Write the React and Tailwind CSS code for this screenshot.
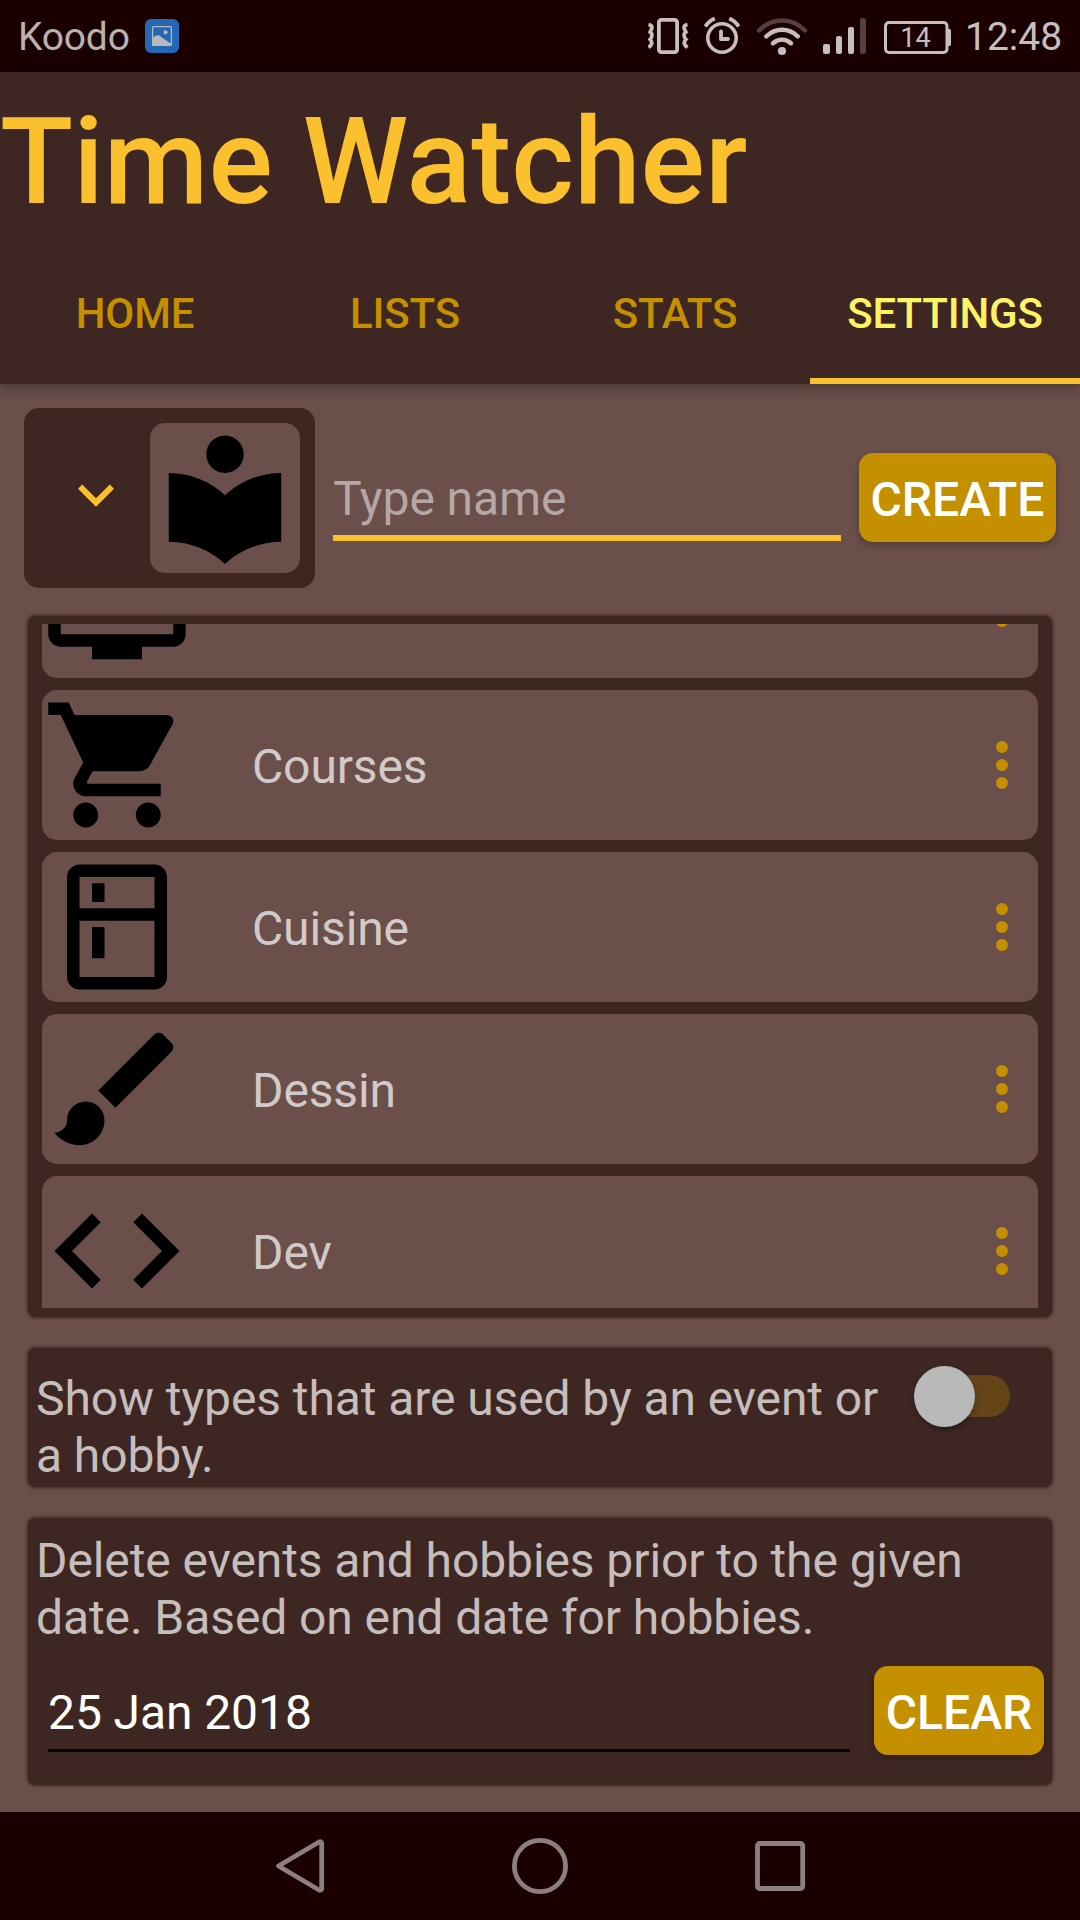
const ICONS = {
  library:
    "M12 11.55C9.64 9.35 6.48 8 3 8v11c3.48 0 6.64 1.35 9 3.55 2.36-2.19 5.52-3.55 9-3.55V8c-3.48 0-6.64 1.35-9 3.55zM12 8c1.66 0 3-1.34 3-3s-1.34-3-3-3-3 1.34-3 3 1.34 3 3 3z",
  tv: "M21 3H3c-1.1 0-2 .9-2 2v12c0 1.1.9 2 2 2h5v2h8v-2h5c1.1 0 1.99-.9 1.99-2L23 5c0-1.1-.9-2-2-2zm0 14H3V5h18v12z",
  cart: "M7 18c-1.1 0-1.99.9-1.99 2S5.9 22 7 22s2-.9 2-2-.9-2-2-2zM1 2v2h2l3.6 7.59-1.35 2.45c-.16.28-.25.61-.25.96 0 1.1.9 2 2 2h12v-2H7.42c-.14 0-.25-.11-.25-.25l.03-.12.9-1.63h7.45c.75 0 1.41-.41 1.75-1.03l3.58-6.49c.08-.14.12-.31.12-.48 0-.55-.45-1-1-1H5.21l-.94-2H1zm16 16c-1.1 0-1.99.9-1.99 2s.89 2 1.99 2 2-.9 2-2-.9-2-2-2z",
  kitchen:
    "M18 2.01L6 2c-1.1 0-2 .89-2 2v16c0 1.1.9 2 2 2h12c1.1 0 2-.9 2-2V4c0-1.1-.9-1.99-2-1.99zM18 20H6v-9.02h12V20zm0-11H6V4h12v5zM8 5h2v3H8zm0 7h2v5H8z",
  brush:
    "M7 14c-1.66 0-3 1.34-3 3 0 1.31-1.16 2-2 2 .92 1.22 2.49 2 4 2 2.21 0 4-1.79 4-4 0-1.66-1.34-3-3-3zm13.71-9.37l-1.34-1.34c-.39-.39-1.02-.39-1.41 0L9 12.25 11.75 15l8.96-8.96c.39-.39.39-1.02 0-1.41z",
  code: "M9.4 16.6L4.8 12l4.6-4.6L8 6l-6 6 6 6 1.4-1.4zm5.2 0l4.6-4.6-4.6-4.6L16 6l6 6-6 6-1.4-1.4z",
};

const TYPES = [
  { name: "", icon: "tv" },
  { name: "Courses", icon: "cart" },
  { name: "Cuisine", icon: "kitchen" },
  { name: "Dessin", icon: "brush" },
  { name: "Dev", icon: "code" },
];

const TABS = ["HOME", "LISTS", "STATS", "SETTINGS"];

function TypeIcon({ name }) {
  return (
    <svg viewBox="0 0 24 24" className="size-[150px] shrink-0 fill-black">
      <path d={ICONS[name]} />
    </svg>
  );
}

function StatusBar() {
  return (
    <div className="flex h-[72px] shrink-0 items-center bg-[#1b0000] text-[39px] leading-[46px] text-[#c6bfbf]">
      <span className="ml-[18px] mt-[1px] w-[112px] whitespace-nowrap tracking-[-0.2px] text-[#b8b2b2]">Koodo</span>
      <svg width="34" height="34" viewBox="0 0 34 34" className="ml-[15px]">
        <rect width="34" height="34" rx="6" fill="#2467b5" />
        <rect x="7.6" y="7.6" width="18.8" height="18.8" rx="1" fill="none" stroke="#b9b9bd" strokeWidth="1.3" />
        <path d="M8 19c3-3.500 6-3.500 8.500-.8L25 24l1 0v2.500H8z" fill="#b9b9bd" />
        <circle cx="20.500" cy="13.300" r="2.100" fill="#b9b9bd" />
      </svg>
      <svg width="304" height="72" viewBox="648 0 304 72" className="ml-[469px] shrink-0" fill="none" stroke="#c6bfbf">
        <rect x="658.900" y="19.900" width="18.200" height="32.200" rx="2.500" strokeWidth="3.800" />
        <path d="M648.500 24.500q4 1 3.300 3.500t-1.600 4q2 1.500 1.600 4t-1.600 3.500q2 2 1.500 4t-3.200 4M687.500 24.500q-4 1-3.300 3.500t1.600 4q-2 1.500-1.600 4t1.600 3.500q-2 2-1.500 4t3.200 4" strokeWidth="3.800" />
        <circle cx="722" cy="38" r="14.200" strokeWidth="3.600" />
        <path d="M721 31.500v7.500h7" strokeWidth="3.800" strokeLinejoin="round" strokeLinecap="round" />
        <path d="M705.300 26.500q3.500-5.500 9.500-8M738.700 26.500q-3.500-5.500-9.500-8" strokeWidth="3.800" />
        <path d="M759 30.500c13-13.500 33-13.500 46 0" stroke="#544040" strokeWidth="4.500" strokeLinecap="round" />
        <path d="M766.300 36.300c9.500-8.600 22-8.600 31.500 0M773 43.200c5.500-4.700 12.500-4.700 18 0" strokeWidth="4.500" strokeLinecap="round" />
        <g stroke="none" fill="#c6bfbf">
          <circle cx="782" cy="51" r="4.100" />
          <rect x="823" y="44" width="7" height="10" rx="2" />
          <rect x="836" y="36" width="6" height="18" rx="2" />
          <rect x="848" y="27" width="6" height="27" rx="2" />
          <rect x="860" y="18" width="6" height="36" rx="2" fill="#544040" />
          <path d="M948 29h1.500q1.500 0 1.500 2v13q0 2-1.500 2H948z" />
        </g>
        <rect x="885.500" y="22.500" width="61.500" height="30" rx="3.500" strokeWidth="3" />
        <text x="915.500" y="47" textAnchor="middle" stroke="none" fill="#c6bfbf" className="text-[27px]">
          14
        </text>
      </svg>
      <span className="ml-[13px] mt-[2px] whitespace-nowrap">12:48</span>
    </div>
  );
}

function Header() {
  return (
    <header className="relative z-10 flex h-[312px] shrink-0 flex-col bg-[#3e2723] shadow-[0_3px_12px_rgba(0,0,0,0.35)]">
      <h1 className="h-[184px] whitespace-nowrap pt-[19px] text-[120px] font-medium leading-[142px] tracking-[0.06px] text-[#fbc02d]">
        Time Watcher
      </h1>
      <nav className="grid grow grid-cols-4 text-center text-[42px] font-medium tracking-[-0.15px] text-[#c49000]">
        {TABS.map((tab) => (
          <a
            key={tab}
            className={
              tab === "SETTINGS"
                ? "border-b-[6px] border-[#fbc02d] pt-[33px] leading-[50px] text-[#fff263]"
                : "pt-[33px] leading-[50px]"
            }
          >
            {tab}
          </a>
        ))}
      </nav>
    </header>
  );
}

function Card({ className, children }) {
  return (
    <section className={"mx-[28px] shrink-0 rounded-[7px] bg-[#3e2723] shadow-[0_0_3px_1px_rgba(50,25,22,0.7)] " + className}>
      {children}
    </section>
  );
}

function ActionButton({ className, children }) {
  return (
    <button
      className={
        "flex h-[89px] shrink-0 items-center justify-center rounded-[14px] bg-[#c49000] pt-[3px] text-[48px] font-medium leading-[57px] text-white shadow-[0_3px_6px_rgba(0,0,0,0.25)] " +
        className
      }
    >
      {children}
    </button>
  );
}

function CreateRow() {
  return (
    <div className="ml-[24px] mt-[24px] flex h-[180px] shrink-0">
      <div className="flex h-[180px] w-[291px] items-center rounded-[15px] bg-[#3e2723] pl-[36px]">
        <svg viewBox="0 0 24 24" className="-mt-[2px] size-[72px] fill-[#fbc02d]">
          <path d="M7.410 7.840L12 12.420l4.590-4.580L18 9.250l-6 6-6-6z" />
        </svg>
        <div className="ml-[18px] rounded-[15px] bg-[#6a4f4b]">
          <TypeIcon name="library" />
        </div>
      </div>
      <div className="ml-[18px] mt-[62px] h-[71px] w-[508px] border-b-[6px] border-[#fbc02d] text-[48px] leading-[57px] tracking-[-0.08px] text-[#b5a7a5]">
        Type name
      </div>
      <ActionButton className="ml-[18px] mt-[45px] w-[197px]">CREATE</ActionButton>
    </div>
  );
}

function TypeRow({ type }) {
  return (
    <li className="flex h-[150px] shrink-0 items-center rounded-[15px] bg-[#6a4f4b]">
      <TypeIcon name={type.icon} />
      <span className="ml-[60px] mt-[3px] grow text-[48px] leading-[57px] tracking-[-0.12px] text-[#d2cac9]">{type.name}</span>
      <div className="mr-[30px] flex flex-col gap-[6px]">
        <i className="size-3 rounded-full bg-[#c49000]" />
        <i className="size-3 rounded-full bg-[#c49000]" />
        <i className="size-3 rounded-full bg-[#c49000]" />
      </div>
    </li>
  );
}

export default function App() {
  return (
    <div className="flex h-[1920px] w-[1080px] flex-col overflow-hidden bg-[#6a4f4b] font-['Roboto',sans-serif]">
      <StatusBar />
      <Header />
      <main className="flex grow flex-col">
        <CreateRow />

        <Card className="mt-[28px] h-[701px] px-[14px] pt-[8px]">
          <div className="h-[684px] overflow-hidden">
            <ul className="-mt-[96px] flex flex-col gap-3">
              {TYPES.map((type) => (
                <TypeRow key={type.icon} type={type} />
              ))}
            </ul>
          </div>
        </Card>

        <Card className="mt-[31px] flex h-[139px] pl-[8px] pt-[22px]">
          <p className="h-[108px] w-[860px] overflow-hidden text-[48px] leading-[57px] tracking-[-0.09px] text-[#c5bebd]">
            Show types that are used by an event or a hobby.
          </p>
          <div className="ml-[18px] mt-[5px] flex h-[42px] w-[96px] items-center rounded-full bg-[linear-gradient(90deg,transparent_30px,#654518_30px)]">
            <div className="size-[61px] shrink-0 rounded-full bg-[#b9b9b9] shadow-[0_3px_5px_rgba(0,0,0,0.35)]" />
          </div>
        </Card>

        <Card className="mt-[31px] h-[267px] pl-[8px] pt-[14px]">
          <p className="w-[960px] text-[48px] leading-[57px] tracking-[-0.09px] text-[#c5bebd]">
            Delete events and hobbies prior to the given date. Based on end date for hobbies.
          </p>
          <div className="mt-[20px] flex">
            <div className="ml-[12px] mt-[18px] h-[68px] w-[802px] border-b-[3px] border-black text-[48px] leading-[57px] tracking-[-0.09px] text-white">
              25 Jan 2018
            </div>
            <ActionButton className="ml-[24px] w-[170px]">CLEAR</ActionButton>
          </div>
        </Card>
      </main>

      <footer className="h-[108px] shrink-0 bg-[#1b0000]">
        <svg width="1080" height="108" viewBox="0 1812 1080 108" fill="none" stroke="#8d7f80" strokeWidth="4.800" strokeLinejoin="round">
          <path d="M278.500 1866L319.500 1841.800Q321.700 1841.500 321.700 1843.500V1888.500Q321.700 1890.500 319.500 1890.200Z" />
          <circle cx="540" cy="1866" r="25.600" />
          <rect x="757.500" y="1843.500" width="45.200" height="45" rx="2" />
        </svg>
      </footer>
    </div>
  );
}
